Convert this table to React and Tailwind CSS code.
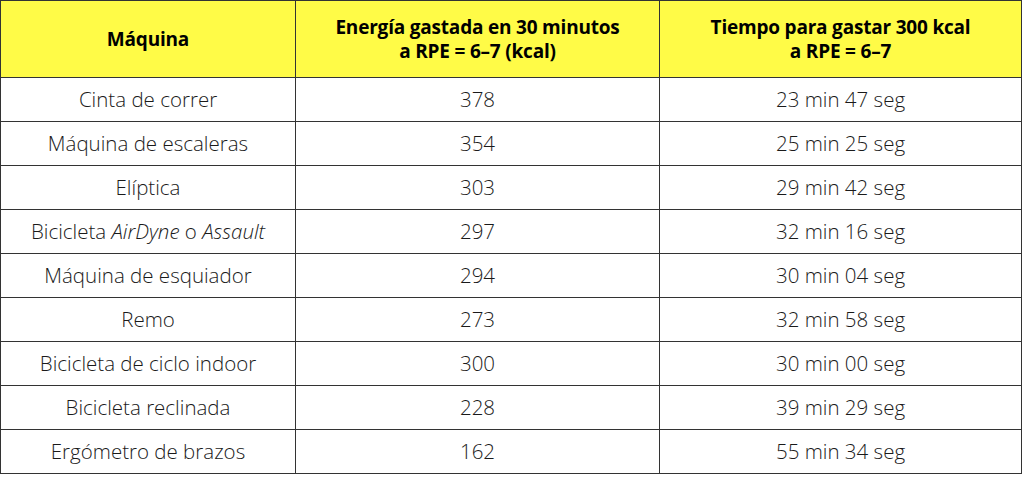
import React from 'react';

const rows = [
  { name: 'Cinta de correr', kcal: '378', time: '23 min 47 seg' },
  { name: 'Máquina de escaleras', kcal: '354', time: '25 min 25 seg' },
  { name: 'Elíptica', kcal: '303', time: '29 min 42 seg' },
  {
    name: (
      <>
        Bicicleta <i>AirDyne</i> o <i>Assault</i>
      </>
    ),
    kcal: '297',
    time: '32 min 16 seg',
  },
  { name: 'Máquina de esquiador', kcal: '294', time: '30 min 04 seg' },
  { name: 'Remo', kcal: '273', time: '32 min 58 seg' },
  { name: 'Bicicleta de ciclo indoor', kcal: '300', time: '30 min 00 seg' },
  { name: 'Bicicleta reclinada', kcal: '228', time: '39 min 29 seg' },
  { name: 'Ergómetro de brazos', kcal: '162', time: '55 min 34 seg' },
];

export default function App() {
  return (
    <div className="w-[1024px] h-[477px] bg-white" style={{ fontFamily: '"Open Sans", Lato, sans-serif' }}>
      <table className="w-[1022px] border-collapse border border-[#555] table-fixed text-center">
        <colgroup>
          <col className="w-[295px]" />
          <col className="w-[364px]" />
          <col />
        </colgroup>
        <thead>
          <tr className="h-[77px] bg-[#fffb47] text-black font-semibold text-[19px] leading-[24px] tracking-[-0.2px]">
            <th className="border border-[#333]">Máquina</th>
            <th className="border border-[#333]">
              Energía gastada en 30 minutos
              <br />a RPE = 6–7 (kcal)
            </th>
            <th className="border border-[#333]">
              Tiempo para gastar 300 kcal
              <br />a RPE = 6–7
            </th>
          </tr>
        </thead>
        <tbody className="text-[20.5px] font-light text-[#1a1a1a]">
          {rows.map((r, i) => (
            <tr key={i} className="h-[44px]">
              <td className="border border-[#333]">{r.name}</td>
              <td className="border border-[#333]">{r.kcal}</td>
              <td className="border border-[#333]">{r.time}</td>
            </tr>
          ))}
        </tbody>
      </table>
    </div>
  );
}
